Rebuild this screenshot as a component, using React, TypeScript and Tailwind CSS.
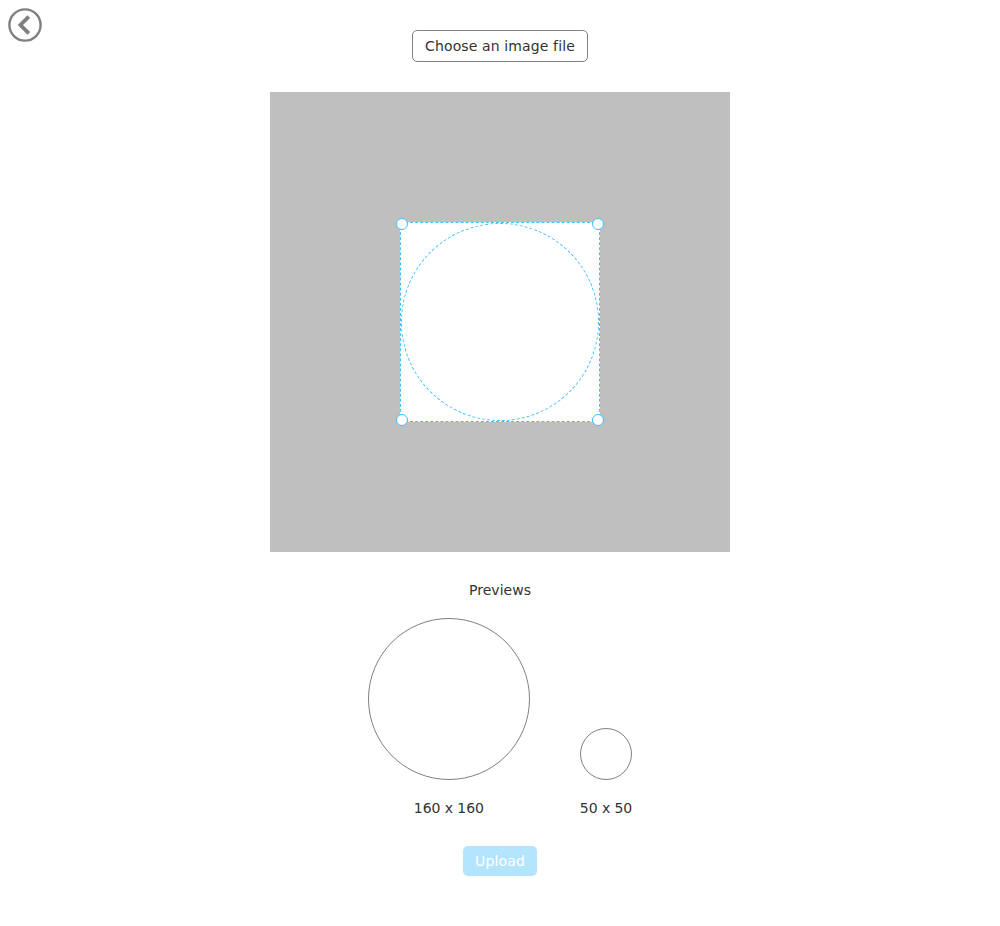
const handle = 'absolute h-3 w-3 rounded-full border border-[#40bfff] bg-white'

function Preview({ label, circle }: { label: string; circle: string }) {
  return (
    <div className="flex flex-col items-center">
      <div className={`rounded-full border border-[#808080] ${circle}`} />
      <span className="mt-[18px] whitespace-nowrap leading-5 tracking-[-0.07px]">{label}</span>
    </div>
  )
}

export default function App() {
  return (
    <main className="relative flex min-h-screen flex-col items-center bg-white pt-[30px] font-['DejaVu_Sans',sans-serif] text-[14px] text-[#333333]">
      <button aria-label="Back" className="absolute left-2 top-2 h-[34px] w-[34px]">
        <svg viewBox="0 0 34 34" width="34" height="34" fill="none" stroke="#808080">
          <circle cx="17" cy="17" r="15.6" strokeWidth="2.4" />
          <path d="M20.8 8.6 12.4 17l8.4 8.4" strokeWidth="3.8" />
        </svg>
      </button>

      <button className="h-8 w-44 whitespace-nowrap rounded-[5px] border border-[#808080] tracking-[0.12px]">
        Choose an image file
      </button>

      <section className="mt-[30px] flex h-[460px] w-[460px] items-center justify-center bg-[#bfbfbf]">
        <div className="relative h-[200px] w-[200px] border border-dashed border-[#40bfff] bg-white">
          <div className="h-full w-full rounded-full border border-dashed border-[#40bfff]" />
          <span className={`${handle} -left-[5px] -top-[5px]`} />
          <span className={`${handle} -right-[5px] -top-[5px]`} />
          <span className={`${handle} -bottom-[5px] -left-[5px]`} />
          <span className={`${handle} -bottom-[5px] -right-[5px]`} />
        </div>
      </section>

      <h2 className="mt-7 leading-5 tracking-[0.04px]">Previews</h2>
      <div className="mt-[18px] flex items-end gap-[50px]">
        <Preview label="160 x 160" circle="h-[162px] w-[162px]" />
        <Preview label="50 x 50" circle="h-[52px] w-[52px]" />
      </div>

      <button disabled className="mt-7 h-[30px] w-[74px] rounded-[5px] bg-[#b3e5ff] tracking-[0.15px] text-white">
        Upload
      </button>
    </main>
  )
}
